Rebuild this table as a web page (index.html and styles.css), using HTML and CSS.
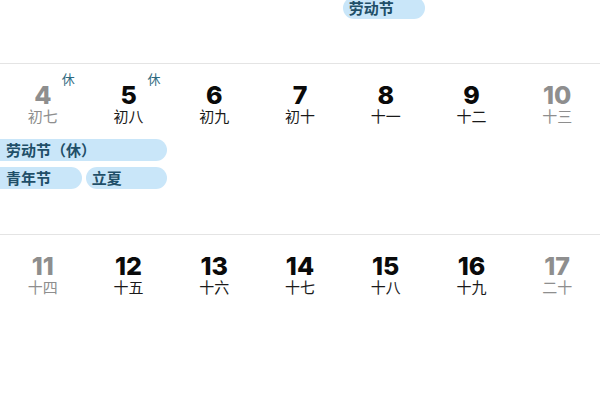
FILE: index.html
```html
<!DOCTYPE html>
<html lang="zh">
<head>
<meta charset="utf-8">
<link rel="stylesheet" href="styles.css">
</head>
<body>
<div class="cal">
  <section class="week week-top">
    <div class="pills">
      <div class="pill-row">
        <span class="pill c5">劳动节</span>
      </div>
    </div>
  </section>

  <section class="week">
    <div class="days">
      <div class="day muted"><span class="num">4</span><span class="rest">休</span><span class="lunar">初七</span></div>
      <div class="day"><span class="num">5</span><span class="rest">休</span><span class="lunar">初八</span></div>
      <div class="day"><span class="num">6</span><span class="lunar">初九</span></div>
      <div class="day"><span class="num">7</span><span class="lunar">初十</span></div>
      <div class="day"><span class="num">8</span><span class="lunar">十一</span></div>
      <div class="day"><span class="num">9</span><span class="lunar">十二</span></div>
      <div class="day muted"><span class="num">10</span><span class="lunar">十三</span></div>
    </div>
    <div class="pills">
      <div class="pill-row">
        <span class="pill cont c1-2">劳动节（休）</span>
      </div>
      <div class="pill-row">
        <span class="pill cont c1">青年节</span>
        <span class="pill c2">立夏</span>
      </div>
    </div>
  </section>

  <section class="week">
    <div class="days">
      <div class="day muted"><span class="num">11</span><span class="lunar">十四</span></div>
      <div class="day"><span class="num">12</span><span class="lunar">十五</span></div>
      <div class="day"><span class="num">13</span><span class="lunar">十六</span></div>
      <div class="day"><span class="num">14</span><span class="lunar">十七</span></div>
      <div class="day"><span class="num">15</span><span class="lunar">十八</span></div>
      <div class="day"><span class="num">16</span><span class="lunar">十九</span></div>
      <div class="day muted"><span class="num">17</span><span class="lunar">二十</span></div>
    </div>
  </section>
</div>
</body>
</html>
```

FILE: styles.css
```css
html, body {
  margin: 0;
  padding: 0;
  background: #ffffff;
}

body {
  width: 600px;
  height: 400px;
  overflow: hidden;
  font-family: "Noto Sans CJK SC", "Noto Sans", sans-serif;
  color: #111;
}

.cal {
  display: flex;
  flex-direction: column;
}

.week {
  box-sizing: border-box;
  height: 171px;
  border-top: 1px solid #e4e4e4;
  padding-top: 20px;
  flex: none;
}

.week-top {
  height: 63px;
  border-top: none;
  padding-top: 0;
  overflow: hidden;
}

.week-top .pills {
  margin-top: -3px;
}

.days {
  display: grid;
  grid-template-columns: repeat(7, 1fr);
}

.day {
  position: relative;
  display: flex;
  flex-direction: column;
  align-items: center;
}

.num {
  font-family: Inter, "Liberation Sans", sans-serif;
  font-weight: 800;
  font-size: 25px;
  line-height: 22px;
  color: #0a0a0a;
}

.lunar {
  margin-top: 2px;
  font-size: 15px;
  line-height: 16px;
  color: #1a1a1a;
}

.muted .num,
.muted .lunar {
  color: #8e8e8e;
}

.rest {
  position: absolute;
  top: -13px;
  left: calc(50% + 19px);
  font-size: 13px;
  line-height: 16px;
  color: #2f6a80;
}

.pills {
  display: flex;
  flex-direction: column;
  gap: 6px;
  margin-top: 15px;
}

.pill-row {
  display: grid;
  grid-template-columns: repeat(7, 1fr);
}

.pill {
  height: 22px;
  line-height: 22px;
  margin-right: 4px;
  padding-left: 6px;
  border-radius: 11px;
  background: #c9e6f9;
  color: #1f4f68;
  font-size: 15px;
  font-weight: 700;
  white-space: nowrap;
  overflow: hidden;
}

.cont {
  border-top-left-radius: 0;
  border-bottom-left-radius: 0;
}

.c1 { grid-column: 1; }
.c2 { grid-column: 2; }
.c5 { grid-column: 5; }
.c1-2 { grid-column: 1 / span 2; }
```
